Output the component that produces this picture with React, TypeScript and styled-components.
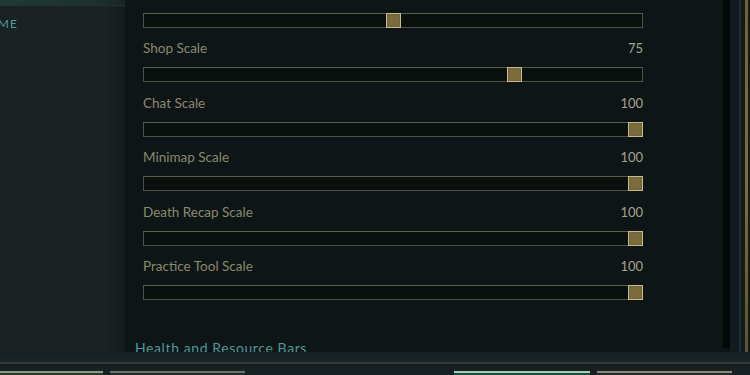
import React from "react";
import styled, { createGlobalStyle } from "styled-components";

const GlobalStyle = createGlobalStyle`
  html, body {
    margin: 0;
    padding: 0;
    background: #0e1517;
  }
`;

const Screen = styled.div`
  width: 750px;
  height: 375px;
  overflow: hidden;
  display: flex;
  flex-direction: column;
  background: #0e1517;
  font-family: "Lato", "Open Sans", sans-serif;
`;

const Body = styled.div`
  display: flex;
  height: 352px;
  flex-shrink: 0;
`;

const Sidebar = styled.nav`
  width: 125px;
  flex-shrink: 0;
  background: linear-gradient(90deg, #192123 0%, #1a2224 85%, #151c1e 100%);
  display: flex;
  flex-direction: column;
`;

const ActiveStrip = styled.div`
  height: 5px;
  background: linear-gradient(90deg, #1f3a36 0%, #1d302e 80%, #1a2224 100%);
  border-bottom: 1px solid #223230;
`;

const NavItem = styled.div`
  padding: 10px 0 0 0;
  margin-left: -21px;
  color: #4e9e9b;
  font-size: 12px;
  letter-spacing: 1px;
  line-height: 16px;
`;

const Panel = styled.section`
  flex: 1;
  display: flex;
  background: #0e1517;
`;

const Content = styled.div`
  flex: 1;
  overflow: hidden;
  padding: 0 0 0 18px;
`;

/* the list is scrolled: the first label sits above the visible area */
const List = styled.div`
  margin-top: -16px;
  width: 500px;
  display: flex;
  flex-direction: column;
  gap: 10.4px;
`;

const Row = styled.div`
  display: flex;
  flex-direction: column;
  gap: 8px;
`;

const LabelLine = styled.div`
  display: flex;
  justify-content: space-between;
  align-items: flex-end;
  height: 21px;
  font-size: 13.5px;
  line-height: 21px;
`;

const Label = styled.span`
  color: #8a896e;
`;

const Value = styled.span`
  color: #a5a38e;
  font-size: 13px;
`;

const Track = styled.div`
  position: relative;
  height: 13px;
  border: 1px solid #4f5244;
  border-top-color: #5a5d4c;
  background: #0a100d;
`;

const Thumb = styled.div`
  position: absolute;
  top: -1px;
  width: 13px;
  height: 13px;
  background: #7a6c3c;
  border: 1px solid #c6bc8e;
  box-shadow: inset 0 0 2px #5e532c;
`;

const SectionTitle = styled.h3`
  margin: 39px 0 0 -8px;
  color: #4f9a98;
  font-size: 14px;
  font-weight: 400;
  letter-spacing: 0.6px;
  line-height: 18px;
`;

const ScrollBar = styled.div`
  width: 7px;
  margin: 0 0 4px 0;
  background: #040707;
`;

const Frame = styled.div`
  width: 20px;
  display: flex;
  background: #111a1d;
`;

const FrameInner = styled.div`
  width: 9px;
  background: #121c20;
  border-right: 2px solid #1e3036;
`;

const FrameGold = styled.div`
  width: 3px;
  margin-left: 4px;
  background: linear-gradient(180deg, #6e6236, #7d6e3e, #5e532e);
`;

const Footer = styled.footer`
  flex: 1;
  display: flex;
  flex-direction: column;
  background: #18232a;
`;

const FooterTop = styled.div`
  height: 10px;
  background: linear-gradient(180deg, #172226, #1a262b);
`;

const FooterRule = styled.div`
  height: 2px;
  background: #363c30;
`;

const FooterBar = styled.div`
  flex: 1;
  display: flex;
  padding-top: 7px;
  background: #172123;
`;

const FooterButton = styled.div<{ $w: number; $ml: number; $tone: "green" | "grey" | "teal" | "gold" }>`
  width: ${({ $w }) => $w}px;
  margin-left: ${({ $ml }) => $ml}px;
  border-top: 2px solid
    ${({ $tone }) =>
      $tone === "green" ? "#8a9a7c" : $tone === "teal" ? "#9fd0b0" : $tone === "gold" ? "#8c8a76" : "#6d726a"};
  background: ${({ $tone }) => ($tone === "teal" ? "#1f4a44" : $tone === "green" ? "#2a3a30" : "#222a2a")};
`;

const sliders = [
  { label: "Cursor Scale", value: 50 },
  { label: "Shop Scale", value: 75 },
  { label: "Chat Scale", value: 100 },
  { label: "Minimap Scale", value: 100 },
  { label: "Death Recap Scale", value: 100 },
  { label: "Practice Tool Scale", value: 100 },
];

const App: React.FC = () => {
  return (
    <>
      <GlobalStyle />
      <Screen>
        <Body>
          <Sidebar>
            <ActiveStrip />
            <NavItem>GAME</NavItem>
          </Sidebar>
          <Panel>
            <Content>
              <List>
                {sliders.map((s) => (
                  <Row key={s.label}>
                    <LabelLine>
                      <Label>{s.label}</Label>
                      <Value>{s.value}</Value>
                    </LabelLine>
                    <Track>
                      <Thumb style={{ left: `calc(${s.value / 100} * (100% - 14px))` }} />
                    </Track>
                  </Row>
                ))}
              </List>
              <SectionTitle>Health and Resource Bars</SectionTitle>
            </Content>
            <ScrollBar />
            <Frame>
              <FrameInner />
              <FrameGold />
            </Frame>
          </Panel>
        </Body>
        <Footer>
          <FooterTop />
          <FooterRule />
          <FooterBar>
            <FooterButton $w={103} $ml={0} $tone="green" />
            <FooterButton $w={135} $ml={7} $tone="grey" />
            <FooterButton $w={136} $ml={209} $tone="teal" />
            <FooterButton $w={135} $ml={7} $tone="gold" />
          </FooterBar>
        </Footer>
      </Screen>
    </>
  );
};

export default App;
